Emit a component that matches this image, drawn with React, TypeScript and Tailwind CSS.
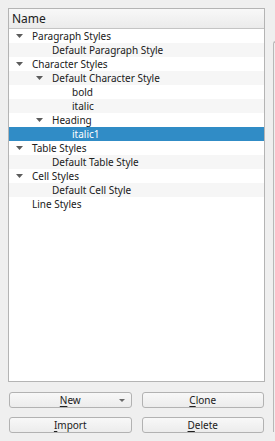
import React from "react";

type Row = { label: string; level: number; expandable?: boolean };

const rows: Row[] = [
  { label: "Paragraph Styles", level: 0, expandable: true },
  { label: "Default Paragraph Style", level: 1 },
  { label: "Character Styles", level: 0, expandable: true },
  { label: "Default Character Style", level: 1, expandable: true },
  { label: "bold", level: 2 },
  { label: "italic", level: 2 },
  { label: "Heading", level: 1, expandable: true },
  { label: "italic1", level: 2 },
  { label: "Table Styles", level: 0, expandable: true },
  { label: "Default Table Style", level: 1 },
  { label: "Cell Styles", level: 0, expandable: true },
  { label: "Default Cell Style", level: 1 },
  { label: "Line Styles", level: 0 },
];

const SELECTED = 7;

export default function App() {
  return (
    <div className="flex w-[275px] h-[441px] overflow-hidden bg-[#efefef] text-[#202020] [font-family:'Noto_Sans',sans-serif]">
      <div className="flex flex-col shrink-0 w-[265px] pl-[8px] pt-[8px]">
        <div className="flex flex-col h-[374px] border border-[#b4b4b4] bg-white">
          <div className="flex items-center h-[20px] border-b border-[#c4c4c4] bg-gradient-to-b from-[#f8f8f8] to-[#ebebeb] pl-[3px] text-[12px]">
            Name
          </div>
          <div className="flex flex-col">
            {rows.map((r, i) => (
              <TreeRow key={r.label} row={r} index={i} />
            ))}
          </div>
        </div>
        <div className="grid grid-cols-2 gap-x-[10px] gap-y-[9px] mt-[10px] px-[1px]">
          <Btn mnemonic="N" rest="ew" dropdown />
          <Btn mnemonic="C" rest="lone" />
          <Btn mnemonic="I" rest="mport" />
          <Btn mnemonic="D" rest="elete" />
        </div>
      </div>
      <div className="shrink-0 w-[40px] h-[391px] ml-[8px] mt-[41px] border-l border-t border-[#b8b8b8] rounded-tl-[3px]" />
    </div>
  );
}

function TreeRow({ row, index }: { row: Row; index: number }) {
  const selected = index === SELECTED;
  const bg = selected ? "bg-[#308cc6] text-white" : index % 2 === 1 ? "bg-[#f6f6f6]" : "bg-white";
  return (
    <div className={`flex items-center h-[14px] text-[10px] leading-none ${bg}`}>
      <div style={{ width: row.level * 20 }} className="shrink-0" />
      <div className="flex items-center justify-center shrink-0 w-[20px]">
        {row.expandable && (
          <svg width="7" height="4" viewBox="0 0 7 4">
            <path d="M0 0 H7 L3.5 4 Z" fill="#5c5c5c" />
          </svg>
        )}
      </div>
      <span className="ml-[3px] whitespace-nowrap">{row.label}</span>
    </div>
  );
}

function Btn({ mnemonic, rest, dropdown }: { mnemonic: string; rest: string; dropdown?: boolean }) {
  return (
    <button className="relative flex items-center justify-center h-[16px] rounded-[3px] border border-[#b2b2b2] bg-gradient-to-b from-[#f8f8f8] to-[#ececec] text-[10px] leading-none text-[#202020]">
      <span>
        <span className="underline underline-offset-[2px]">{mnemonic}</span>
        {rest}
      </span>
      {dropdown && (
        <svg className="absolute right-[6px] top-[6px]" width="6" height="3" viewBox="0 0 6 3">
          <path d="M0 0 H6 L3 3 Z" fill="#6a6a6a" />
        </svg>
      )}
    </button>
  );
}
